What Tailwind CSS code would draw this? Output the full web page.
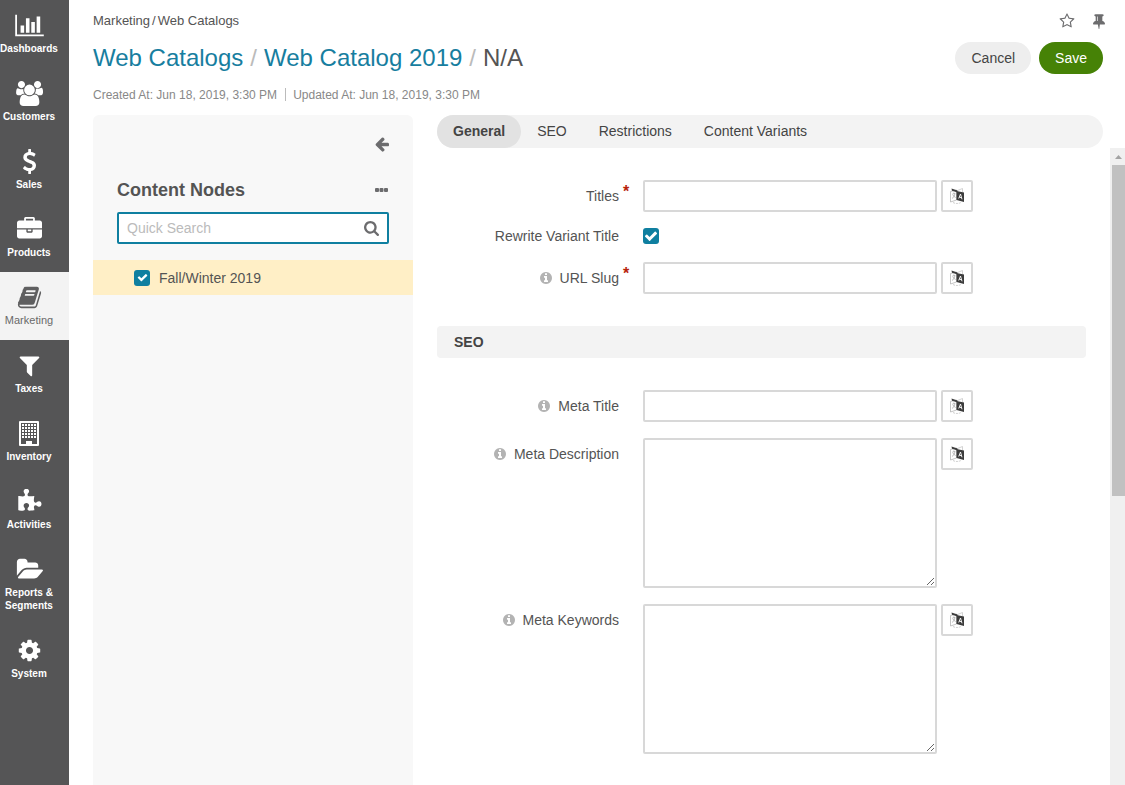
<!DOCTYPE html>
<html lang="en">
<head>
<meta charset="utf-8">
<meta name="viewport" content="width=device-width, initial-scale=1">
<title>Web Catalog 2019</title>
<script src="https://cdn.jsdelivr.net/npm/@tailwindcss/browser@4"></script>
</head>
<body class="flex h-screen overflow-hidden bg-white font-['Liberation_Sans',Arial,sans-serif] text-sm leading-5 text-[#545454]">

<svg class="hidden" aria-hidden="true">
  <symbol id="check" viewBox="0 0 1792 1792"><path d="M1671 566q0 40-28 68l-724 724-136 136q-28 28-68 28t-68-28l-136-136-362-362q-28-28-28-68t28-68l136-136q28-28 68-28t68 28l294 295 656-657q28-28 68-28t68 28l136 136q28 28 28 68z"/></symbol>
  <symbol id="info" viewBox="128 128 1536 1536"><path d="M1152 1376v-160q0-14-9-23t-23-9h-96v-512q0-14-9-23t-23-9h-320q-14 0-23 9t-9 23v160q0 14 9 23t23 9h96v320h-96q-14 0-23 9t-9 23v160q0 14 9 23t23 9h448q14 0 23-9t9-23zm-128-896v-160q0-14-9-23t-23-9h-192q-14 0-23 9t-9 23v160q0 14 9 23t23 9h192q14 0 23-9t9-23zm640 416q0 209-103 385.5t-279.5 279.5-385.5 103-385.5-103-279.5-279.5-103-385.5 103-385.5 279.5-279.5 385.5-103 385.5 103 279.5 279.5 103 385.5z"/></symbol>
  <symbol id="translate" viewBox="0 0 14 16">
    <path d="M.500 3.500L6.500 2V12L.500 14Z" fill="#fff" stroke="#b5b5b5" stroke-width=".8"/>
    <path d="M7.500 2.500L12.500 .500V4" fill="none" stroke="#c8c8c8" stroke-width=".8"/>
    <path d="M1.500 .500L7.500 2.500V4.500L2 2.800Z" fill="#3c3c3c"/>
    <path d="M2.300 6.200L5.300 5.200M3.800 4.500V5.500M5 5.600Q4.500 9 2 10.500M2.800 6.800Q4 9 5.700 9.500" fill="none" stroke="#aaa" stroke-width=".8"/>
    <path d="M6.500 3L14 4.500V14L6.500 12Z" fill="#3c3c3c"/>
    <path d="M8.700 10.500L10.500 6L12 11.300M9.400 9.300L11.500 9.700" fill="none" stroke="#fff" stroke-width=".9"/>
    <path d="M3 14.500Q7 16.500 11 14.500" fill="none" stroke="#c8c8c8" stroke-width=".9" stroke-dasharray="2 1"/>
  </symbol>
</svg>

<nav aria-label="Main menu" class="w-[69px] shrink-0 bg-[#555556] text-center text-[10px] leading-[13px] font-bold text-white">
  <a href="#" class="flex h-[68px] flex-col items-center gap-1 pt-[13px] pr-[11px]">
    <svg class="h-[25px] w-[29px] shrink-0" viewBox="0 0 2048 1792" fill="currentColor"><path d="M640 896v512h-256v-512h256zm384-512v1024h-256v-1024h256zm1024 1152v128h-2048v-1536h128v1408h1920zm-640-896v768h-256v-768h256zm384-384v1152h-256v-1152h256z"/></svg>
    <span>Dashboards</span>
  </a>
  <a href="#" class="flex h-[68px] flex-col items-center gap-1 pt-[13px] pr-[11px]">
    <svg class="h-[25px] w-[27px] shrink-0" viewBox="0 0 1920 1792" fill="currentColor"><path d="M593 896q-162 5-265 128h-134q-82 0-138-40.500t-56-118.500q0-353 124-353 6 0 43.500 21t97.500 42.500 119 21.500q67 0 133-23-5 37-5 66 0 159 93 293zm1071 637q0 120-73 189.500t-194 69.500h-874q-121 0-194-69.500t-73-189.500q0-53 3.500-103.500t14-109 26.500-108.500 43-97.500 62-81 85.500-53.500 111.500-20q10 0 43 21.500t73 48 107 48 135 21.500 135-21.500 107-48 73-48 43-21.500q61 0 111.500 20t85.500 53.500 62 81 43 97.500 26.500 108.500 14 109 3.500 103.500zm-1024-1277q0 106-75 181t-181 75-181-75-75-181 75-181 181-75 181 75 75 181zm704 384q0 159-112.500 271.500t-271.500 112.500-271.500-112.500-112.500-271.500 112.500-271.500 271.500-112.500 271.500 112.500 112.500 271.500zm576 225q0 78-56 118.500t-138 40.500h-134q-103-123-265-128 93-134 93-293 0-29-5-66 66 23 133 23 59 0 119-21.500t97.500-42.500 43.500-21q124 0 124 353zm-128-609q0 106-75 181t-181 75-181-75-75-181 75-181 181-75 181 75 75 181z"/></svg>
    <span>Customers</span>
  </a>
  <a href="#" class="flex h-[68px] flex-col items-center gap-1 pt-[13px] pr-[11px]">
    <svg class="size-[25px] shrink-0" viewBox="0 0 1792 1792" fill="currentColor"><path d="M1362 1185q0 153-99.500 263.500t-258.500 136.500v175q0 14-9 23t-23 9h-135q-13 0-22.500-9.500t-9.500-22.500v-175q-66-9-127.500-31t-101.500-44.500-74-48-46.500-37.500-17.500-18q-17-21-2-41l103-135q7-10 23-12 15-2 24 9l2 2q113 99 243 125 37 8 74 8 81 0 142.500-43t61.500-122q0-28-15-53t-33.500-42-58.500-37.500-66-32-80-32.500q-39-16-61.500-25t-61.500-26.500-62.500-31-56.500-35.500-53.500-42.500-43.500-49-35.500-58-21-66.500-8.500-78q0-138 98-242t255-134v-180q0-13 9.500-22.500t22.500-9.500h135q14 0 23 9t9 23v176q57 6 110.500 23t87 33.500 63.500 37.500 39 29 15 14q17 18 5 38l-81 146q-8 15-23 16-14 3-27-7-3-3-14.500-12t-39-26.500-58.500-32-74.500-26-85.500-11.500q-95 0-155 43t-60 111q0 26 8.500 48t29.500 41.500 39.500 33 56 31 60.500 27 70 27.500q53 20 81 31.500t76 35 75.500 42.500 62 50 53 63.500 31.500 76.500 13 94z"/></svg>
    <span>Sales</span>
  </a>
  <a href="#" class="flex h-[68px] flex-col items-center gap-1 pt-[13px] pr-[11px]">
    <svg class="size-[25px] shrink-0" viewBox="0 0 1792 1792" fill="currentColor"><path d="M640 256h512v-128h-512v128zm1152 640v480q0 66-47 113t-113 47h-1472q-66 0-113-47t-47-113v-480h672v160q0 26 19 45t45 19h320q26 0 45-19t19-45v-160h672zm-768 0v128h-256v-128h256zm768-480v384h-1792v-384q0-66 47-113t113-47h352v-160q0-40 28-68t68-28h576q40 0 68 28t28 68v160h352q66 0 113 47t47 113z"/></svg>
    <span>Products</span>
  </a>
  <a href="#" aria-current="page" class="flex h-[68px] flex-col items-center gap-1 bg-[#f3f3f3] pt-[13px] pr-[11px] text-[11px] font-normal text-[#6a6a6a]">
    <svg class="size-[25px] shrink-0 text-[#5f5f60]" viewBox="0 0 1792 1792" fill="currentColor"><path d="M1703 478q40 57 18 129l-275 906q-19 64-76.500 107.500t-122.500 43.500h-923q-77 0-148.500-53.500t-99.500-131.500q-24-67-2-127 0-4 3-27t4-37q1-8-3-21.500t-3-19.500q2-11 8-21t16.500-23.500 16.500-23.500q23-38 45-91.500t30-91.500q3-10 .5-30t-.5-28q3-11 17-28t17-23q21-36 42-92t25-90q1-9-2.500-32t.5-28q4-13 22-30.500t22-22.500q19-26 42.500-84.500t27.500-96.500q1-8-3-25.500t-2-26.500q2-8 9-18t18-23 17-21q8-12 16.500-30.500t15-35 16-36 19.500-32 26.500-23.500 36-11.500 47.500 5.500l-1 3q38-9 51-9h761q74 0 114 56t18 130l-274 906q-36 119-71.500 153.500t-128.500 34.500h-869q-27 0-38 15-11 16-1 43 24 70 144 70h923q29 0 56-15.500t35-41.500l300-987q7-22 5-57 38 15 59 43zm-1064 2q-4 13 2 22.500t20 9.500h608q13 0 25.500-9.500t16.500-22.500l21-64q4-13-2-22.500t-20-9.500h-608q-13 0-25.500 9.500t-16.500 22.500zm-83 256q-4 13 2 22.500t20 9.500h608q13 0 25.500-9.500t16.500-22.500l21-64q4-13-2-22.500t-20-9.500h-608q-13 0-25.500 9.500t-16.500 22.500z"/></svg>
    <span>Marketing</span>
  </a>
  <a href="#" class="flex h-[68px] flex-col items-center gap-1 pt-[13px] pr-[11px]">
    <svg class="size-[25px] shrink-0" viewBox="0 0 1792 1792" fill="currentColor"><path d="M1595 295q17 41-14 70l-493 493v742q0 42-39 59-13 5-25 5-27 0-45-19l-256-256q-19-19-19-45v-486l-493-493q-31-29-14-70 17-39 59-39h1280q42 0 59 39z"/></svg>
    <span>Taxes</span>
  </a>
  <a href="#" class="flex h-[68px] flex-col items-center gap-1 pt-[13px] pr-[11px]">
    <svg class="h-[25px] w-5 shrink-0" viewBox="0 0 20 25"><path fill="currentColor" fill-rule="evenodd" d="M1 0H19Q20 0 20 1V24Q20 25 19 25H1Q0 25 0 24V1Q0 0 1 0ZM2 2V23H7V20H13V23H18V2Z"/><path stroke="currentColor" stroke-width="2" stroke-dasharray="2 1" d="M3 4H17M3 7H17M3 10H17M3 13H17M3 16H17"/></svg>
    <span>Inventory</span>
  </a>
  <a href="#" class="flex h-[68px] flex-col items-center gap-1 pt-[13px] pr-[11px]">
    <svg class="size-[25px] shrink-0" viewBox="0 0 1792 1792" fill="currentColor"><path d="M1755 1083q0 81-44.500 135t-123.500 54q-41 0-77.500-17.500t-59-38-56.500-38-71-17.500q-110 0-110 124 0 39 16 115t15 115v5q-22 0-33 1-34 3-97.500 11.500t-115.500 13.500-98 5q-61 0-103-26.500t-42-83.500q0-37 17.500-71t38-56.500 38-59 17.500-77.500q0-79-54-123.500t-135-44.500q-84 0-143 45.500t-59 127.500q0 43 15 83t33.500 64.500 33.500 53 15 50.500q0 45-46 89-37 35-117 35-95 0-245-24-9-2-27.500-4t-27.500-4l-13-2q-1 0-3-1-2 0-2-1v-1024q2 1 17.500 3.500t34 5 21.500 3.500q150 24 245 24 80 0 117-35 46-44 46-89 0-22-15-50.500t-33.500-53-33.500-64.500-15-83q0-82 59-127.500t144-45.500q80 0 134 44.500t54 123.500q0 41-17.500 77.500t-38 59-38 56.500-17.500 71q0 57 42 83.500t103 26.500q64 0 180-15t163-17v2q-1 2-3.500 17.500t-5 34-3.500 21.500q-24 150-24 245 0 80 35 117 44 46 89 46 22 0 50.500-15t53-33.500 64.500-33.500 83-15q82 0 127.500 59t45.500 143z"/></svg>
    <span>Activities</span>
  </a>
  <a href="#" class="flex h-[81px] flex-col items-center gap-1 pt-[13px] pr-[11px]">
    <svg class="h-[25px] w-[27px] shrink-0" viewBox="0 0 1944 1792" fill="currentColor"><path d="M1943 952q0 31-31 66l-336 396q-43 51-120.500 86.500t-143.500 35.500h-1088q-34 0-60.500-13t-26.500-43q0-31 31-66l336-396q43-51 120.500-86.500t143.500-35.500h1088q34 0 60.500 13t26.500 43zm-343-344v160h-832q-94 0-197 47.500t-164 119.500l-337 396-5 6q0-4-.5-12.500t-.5-12.500v-960q0-92 66-158t158-66h320q92 0 158 66t66 158v32h544q92 0 158 66t66 158z"/></svg>
    <span>Reports &amp;<br>Segments</span>
  </a>
  <a href="#" class="flex h-[68px] flex-col items-center gap-1 pt-[13px] pr-[11px]">
    <svg class="size-[25px] shrink-0" viewBox="0 0 1792 1792" fill="currentColor"><path d="M1152 896q0-106-75-181t-181-75-181 75-75 181 75 181 181 75 181-75 75-181zm512-109v222q0 12-8 23t-20 13l-185 28q-19 54-39 91 35 50 107 138 10 12 10 25t-9 23q-27 37-99 108t-94 71q-12 0-26-9l-138-108q-44 23-91 38-16 136-29 186-7 28-36 28h-222q-14 0-24.500-8.500t-11.500-21.500l-28-184q-49-16-90-37l-141 107q-10 9-25 9-14 0-25-11-126-114-165-168-7-10-7-23 0-12 8-23 15-21 51-66.500t54-70.500q-27-50-41-99l-183-27q-13-2-21-12.500t-8-23.500v-222q0-12 8-23t19-13l186-28q14-46 39-92-40-57-107-138-10-12-10-24 0-10 9-23 26-36 98.500-107.500t94.500-71.500q13 0 26 10l138 107q44-23 91-38 16-136 29-186 7-28 36-28h222q14 0 24.500 8.500t11.500 21.500l28 184q49 16 90 37l142-107q9-9 24-9 13 0 25 10 129 119 165 170 7 8 7 22 0 12-8 23-15 21-51 66.500t-54 70.500q26 50 41 98l183 28q13 2 21 12.500t8 23.500z"/></svg>
    <span>System</span>
  </a>
</nav>

<main class="flex min-w-0 flex-1 flex-col pl-6">
  <header class="flex shrink-0 flex-col">
    <div class="flex h-[42px] items-center justify-between pr-5">
      <nav aria-label="Breadcrumb" class="flex gap-0.5 text-[13px]"><a href="#">Marketing</a><span>/</span><a href="#">Web Catalogs</a></nav>
      <div class="flex items-center gap-[18px] text-[#6c6c6e]">
        <button type="button" aria-label="Add to favorites"><svg class="size-4" viewBox="0 0 1792 1792" fill="currentColor"><path d="M1201 1004l306-297-422-62-189-382-189 382-422 62 306 297-73 421 378-199 377 199zm527-357q0 22-26 48l-363 354 86 500q1 7 1 20 0 50-41 50-19 0-40-12l-449-236-449 236q-22 12-40 12-21 0-31.500-14.500t-10.500-35.500q0-6 2-20l86-500-364-354q-25-27-25-48 0-37 56-46l502-73 225-455q19-41 49-41t49 41l225 455 502 73q56 9 56 46z"/></svg></button>
        <button type="button" aria-label="Pin"><svg class="h-4 w-3" viewBox="320 0 1152 1792" fill="currentColor" preserveAspectRatio="none"><path d="M800 864v-448q0-14-9-23t-23-9-23 9-9 23v448q0 14 9 23t23 9 23-9 9-23zm672 352q0 26-19 45t-45 19h-429l-51 483q-2 12-10.500 20.500t-20.500 8.500h-1q-27 0-32-27l-76-485h-404q-26 0-45-19t-19-45q0-123 78.500-221.500t177.500-98.500v-512q-52 0-90-38t-38-90 38-90 90-38h640q52 0 90 38t38 90-38 90-90 38v512q99 0 177.500 98.500t78.500 221.500z"/></svg></button>
      </div>
    </div>
    <div class="flex h-8 items-center justify-between pr-[22px]">
      <h1 class="flex gap-[7px] text-2xl"><a href="#" class="text-[#177e9f]">Web Catalogs</a><span class="text-[#bbb]">/</span><a href="#" class="text-[#177e9f]">Web Catalog 2019</a><span class="text-[#bbb]">/</span><span class="text-[#545454]">N/A</span></h1>
      <div class="flex gap-2">
        <button type="button" class="h-8 rounded-full bg-[#eee] px-4 text-[#444]">Cancel</button>
        <button type="button" class="h-8 rounded-full bg-[#468206] px-4 text-white">Save</button>
      </div>
    </div>
    <div class="flex h-[41px] items-center text-xs text-[#888]">
      <span class="pr-2">Created At: Jun 18, 2019, 3:30 PM</span>
      <span class="h-[13px] w-px bg-[#bbb]"></span>
      <span class="pl-[7px]">Updated At: Jun 18, 2019, 3:30 PM</span>
    </div>
  </header>

  <div class="flex min-h-0 flex-1 gap-6">
    <aside class="w-80 shrink-0 rounded-t-md bg-[#f8f8f8] pt-[19px]">
      <div class="flex flex-col px-6">
        <button type="button" aria-label="Collapse panel" class="self-end text-[#6c6c6e]"><svg class="h-5 w-[14px]" viewBox="128 0 1536 1792" fill="currentColor"><path d="M1664 896v128q0 53-32.500 90.500t-84.500 37.500h-704l293 294q38 36 38 90t-38 90l-75 76q-37 37-90 37-52 0-91-37l-651-652q-37-37-37-90 0-52 37-91l651-650q38-38 91-38 52 0 90 38l75 74q38 38 38 91t-38 91l-293 293h704q52 0 84.500 37.500t32.500 90.500z"/></svg></button>
        <div class="mt-6 flex items-center justify-between">
          <h2 class="text-lg leading-6 font-bold">Content Nodes</h2>
          <button type="button" aria-label="More actions" class="pr-px"><svg class="h-1 w-[13px]" viewBox="0 0 13 4" fill="#6c6c6e"><rect width="4" height="4" rx="1"/><rect x="4.500" width="4" height="4" rx="1"/><rect x="9" width="4" height="4" rx="1"/></svg></button>
        </div>
        <form class="mt-[10px] flex h-8 items-center rounded-xs border-2 border-[#0f7fa0] bg-white pr-2">
          <input type="search" aria-label="Quick Search" placeholder="Quick Search" class="min-w-0 flex-1 pl-2 outline-none placeholder:text-[#bbb]">
          <button type="button" aria-label="Search"><svg class="size-[15px]" viewBox="64 128 1664 1664" fill="#6c6c6e"><path d="M1216 832q0-185-131.500-316.500t-316.500-131.500-316.500 131.500-131.500 316.500 131.500 316.500 316.500 131.500 316.500-131.500 131.500-316.500zm512 832q0 52-38 90t-90 38q-54 0-90-38l-343-342q-179 124-399 124-143 0-273.500-55.500t-225-150-150-225-55.500-273.500 55.500-273.500 150-225 225-150 273.500-55.500 273.500 55.500 225 150 150 225 55.500 273.500q0 220-124 399l343 343q37 37 37 90z"/></svg></button>
        </form>
      </div>
      <label class="mt-4 flex h-[35px] items-center gap-[9px] bg-[#ffefc6] pl-[41px]">
        <span class="grid size-4 place-items-center"><input type="checkbox" checked class="col-start-1 row-start-1 size-4 appearance-none rounded-[3px] bg-[#0f7fa0]"><svg class="pointer-events-none col-start-1 row-start-1 size-[11px] fill-white"><use href="#check"/></svg></span>
        Fall/Winter 2019
      </label>
    </aside>

    <section class="flex min-w-0 flex-1 flex-col">
      <div class="mr-[22px] flex h-[33px] shrink-0 rounded-full bg-[#f3f3f3] text-[#444]" role="tablist">
        <button type="button" role="tab" aria-selected="true" class="rounded-full bg-[#e2e2e2] px-4 pb-0.5 font-bold">General</button>
        <button type="button" role="tab" class="px-4 pb-0.5">SEO</button>
        <button type="button" role="tab" class="px-4 pb-0.5">Restrictions</button>
        <button type="button" role="tab" class="px-4 pb-0.5">Content Variants</button>
      </div>

      <div class="flex min-h-0 flex-1">
        <form class="min-w-0 flex-1 overflow-hidden pt-8 pr-6">
          <div class="flex gap-1">
            <label for="titles" class="flex h-8 w-[182px] items-center justify-end">Titles</label>
            <span class="w-4 text-base leading-6 font-bold text-[#b8230b]" aria-hidden="true">*</span>
            <input id="titles" type="text" required class="h-8 w-[294px] rounded-xs border-2 border-[#d8d8d8] px-2">
            <button type="button" aria-label="Translate titles" class="grid size-8 place-items-center rounded-xs border-2 border-[#d8d8d8]"><svg class="h-4 w-[14px]"><use href="#translate"/></svg></button>
          </div>
          <div class="mt-4 flex items-center gap-6">
            <label for="rewrite" class="flex h-4 w-[182px] items-center justify-end">Rewrite Variant Title</label>
            <span class="grid size-4 place-items-center"><input id="rewrite" type="checkbox" checked class="col-start-1 row-start-1 size-4 appearance-none rounded-[3px] bg-[#0f7fa0]"><svg class="pointer-events-none col-start-1 row-start-1 size-[14px] fill-white"><use href="#check"/></svg></span>
          </div>
          <div class="mt-[18px] flex gap-1">
            <label for="slug" class="flex h-8 w-[182px] items-center justify-end gap-2"><svg class="size-3 fill-[#b3b3b3]"><use href="#info"/></svg>URL Slug</label>
            <span class="w-4 text-base leading-6 font-bold text-[#b8230b]" aria-hidden="true">*</span>
            <input id="slug" type="text" required class="h-8 w-[294px] rounded-xs border-2 border-[#d8d8d8] px-2">
            <button type="button" aria-label="Translate URL slug" class="grid size-8 place-items-center rounded-xs border-2 border-[#d8d8d8]"><svg class="h-4 w-[14px]"><use href="#translate"/></svg></button>
          </div>

          <h3 class="mt-8 h-8 rounded bg-[#f3f3f3] px-[17px] leading-8 font-bold text-[#444]">SEO</h3>

          <div class="mt-8 flex gap-1">
            <label for="meta-title" class="mr-5 flex h-8 w-[182px] items-center justify-end gap-2"><svg class="size-3 fill-[#b3b3b3]"><use href="#info"/></svg>Meta Title</label>
            <input id="meta-title" type="text" class="h-8 w-[294px] rounded-xs border-2 border-[#d8d8d8] px-2">
            <button type="button" aria-label="Translate meta title" class="grid size-8 place-items-center rounded-xs border-2 border-[#d8d8d8]"><svg class="h-4 w-[14px]"><use href="#translate"/></svg></button>
          </div>
          <div class="mt-4 flex gap-1">
            <label for="meta-description" class="mr-5 flex h-8 w-[182px] items-center justify-end gap-2"><svg class="size-3 fill-[#b3b3b3]"><use href="#info"/></svg>Meta Description</label>
            <textarea id="meta-description" class="h-[150px] w-[294px] rounded-xs border-2 border-[#d8d8d8] px-2"></textarea>
            <button type="button" aria-label="Translate meta description" class="grid size-8 place-items-center rounded-xs border-2 border-[#d8d8d8]"><svg class="h-4 w-[14px]"><use href="#translate"/></svg></button>
          </div>
          <div class="mt-4 flex gap-1">
            <label for="meta-keywords" class="mr-5 flex h-8 w-[182px] items-center justify-end gap-2"><svg class="size-3 fill-[#b3b3b3]"><use href="#info"/></svg>Meta Keywords</label>
            <textarea id="meta-keywords" class="h-[150px] w-[294px] rounded-xs border-2 border-[#d8d8d8] px-2"></textarea>
            <button type="button" aria-label="Translate meta keywords" class="grid size-8 place-items-center rounded-xs border-2 border-[#d8d8d8]"><svg class="h-4 w-[14px]"><use href="#translate"/></svg></button>
          </div>
        </form>

        <div class="flex w-[15px] shrink-0 flex-col items-end bg-[#f0f0f0]" aria-hidden="true">
          <svg class="h-[17px] w-[15px] shrink-0" viewBox="0 0 15 17"><path d="M5 11L8.500 7L12 11Z" fill="#a3a3a3"/></svg>
          <div class="h-[52%] w-[13px] bg-[#c1c1c1]"></div>
        </div>
      </div>
    </section>
  </div>
</main>
</body>
</html>
